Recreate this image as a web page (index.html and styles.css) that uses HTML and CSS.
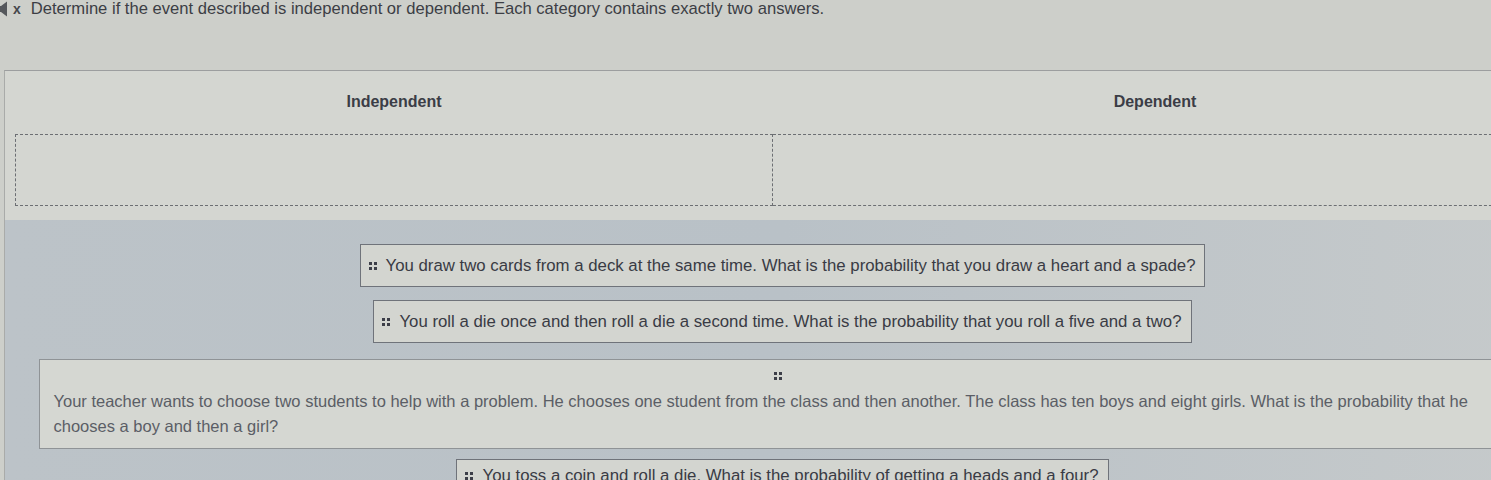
FILE: index.html
```html
<!DOCTYPE html>
<html lang="en">
<head>
<meta charset="utf-8">
<title>Independent or dependent</title>
<link rel="stylesheet" href="styles.css">
</head>
<body>
<div class="page">
  <div class="instructions">
    <svg class="speaker" width="12" height="16" viewBox="0 0 12 16" aria-hidden="true">
      <path d="M0 5 H3 L9 0.5 V15.5 L3 11 H0 Z" fill="#55585c"/>
    </svg>
    <span class="mute">x</span>
    <span class="prompt">Determine if the event described is independent or dependent. Each category contains exactly two answers.</span>
  </div>

  <div class="panel">
    <div class="categories">
      <div class="category">
        <div class="cat-label">Independent</div>
        <div class="dropzone"></div>
      </div>
      <div class="category">
        <div class="cat-label">Dependent</div>
        <div class="dropzone dropzone-right"></div>
      </div>
    </div>

    <div class="pool">
      <div class="card">
        <svg class="handle" width="8" height="8" viewBox="0 0 8 8" aria-hidden="true"><rect x="0" y="0" width="3" height="3"/><rect x="5" y="0" width="3" height="3"/><rect x="0" y="5" width="3" height="3"/><rect x="5" y="5" width="3" height="3"/></svg>
        <span>You draw two cards from a deck at the same time. What is the probability that you draw a heart and a spade?</span>
      </div>
      <div class="card">
        <svg class="handle" width="8" height="8" viewBox="0 0 8 8" aria-hidden="true"><rect x="0" y="0" width="3" height="3"/><rect x="5" y="0" width="3" height="3"/><rect x="0" y="5" width="3" height="3"/><rect x="5" y="5" width="3" height="3"/></svg>
        <span>You roll a die once and then roll a die a second time. What is the probability that you roll a five and a two?</span>
      </div>
      <div class="card card-wide">
        <svg class="handle handle-top" width="8" height="8" viewBox="0 0 8 8" aria-hidden="true"><rect x="0" y="0" width="3" height="3"/><rect x="5" y="0" width="3" height="3"/><rect x="0" y="5" width="3" height="3"/><rect x="5" y="5" width="3" height="3"/></svg>
        <p class="wide-text">Your teacher wants to choose two students to help with a problem. He chooses one student from the class and then another. The class has ten boys and eight girls. What is the probability that he chooses a boy and then a girl?</p>
      </div>
      <div class="card card-last">
        <svg class="handle" width="8" height="8" viewBox="0 0 8 8" aria-hidden="true"><rect x="0" y="0" width="3" height="3"/><rect x="5" y="0" width="3" height="3"/><rect x="0" y="5" width="3" height="3"/><rect x="5" y="5" width="3" height="3"/></svg>
        <span>You toss a coin and roll a die. What is the probability of getting a heads and a four?</span>
      </div>
    </div>
  </div>
</div>
</body>
</html>
```

FILE: styles.css
```css
html, body {
  margin: 0;
  padding: 0;
}

body {
  background: #cdcfca;
  font-family: "Liberation Sans", Arial, sans-serif;
  color: #3a3c44;
  overflow: hidden;
  width: 1491px;
  height: 480px;
}

.page {
  width: 1560px;
}

.instructions {
  display: flex;
  align-items: center;
  height: 18px;
  font-size: 16.6px;
  line-height: 18px;
  color: #3c3e45;
}

.speaker {
  margin-left: -2px;
  flex: none;
}

.mute {
  font-size: 14px;
  font-weight: bold;
  margin-left: 3px;
  color: #45474c;
}

.prompt {
  margin-left: 10px;
  white-space: nowrap;
}

.panel {
  margin-top: 52px;
  margin-left: 4px;
  border-top: 1px solid #9c9e9f;
  border-left: 1px solid #a9aba9;
  background: #d4d6d1;
  padding-bottom: 40px;
}

.categories {
  display: grid;
  grid-template-columns: 758px 764px;
  padding-left: 10px;
}

.cat-label {
  font-weight: bold;
  font-size: 16px;
  line-height: 20px;
  text-align: center;
  padding-top: 21px;
  color: #3b3d46;
}

.dropzone {
  margin-top: 22px;
  height: 70px;
  border: 1px dashed #6c6f73;
}

.dropzone-right {
  border-left: none;
}

.pool {
  margin-top: 14px;
  background: linear-gradient(90deg, #bcc3c8 0%, #b9c1c7 50%, #c6cacb 100%);
  padding: 24px 0 20px;
  display: flex;
  flex-direction: column;
  align-items: center;
}

.card {
  display: flex;
  align-items: center;
  gap: 9px;
  background: #d3d5d0;
  border: 1px solid #6f737a;
  padding: 0 9px 0 8px;
  height: 41px;
  font-size: 16.8px;
  white-space: nowrap;
  color: #393b44;
  margin-bottom: 13px;
}

.handle {
  flex: none;
  fill: #3c3e48;
}

.card-wide {
  flex-direction: column;
  align-items: stretch;
  gap: 0;
  width: 1458px;
  height: auto;
  padding: 12px 14px 9px;
  white-space: normal;
  margin-top: 3px;
  border-color: #8f9396;
  background: #d5d7d2;
  margin-bottom: 10px;
}

.handle-top {
  align-self: center;
  margin-left: -10px;
}

.wide-text {
  margin: 9px 0 0;
  font-size: 16.5px;
  line-height: 25px;
  color: #5b5e66;
}

.card-last {
  height: 31px;
  padding-bottom: 10px;
}
```
